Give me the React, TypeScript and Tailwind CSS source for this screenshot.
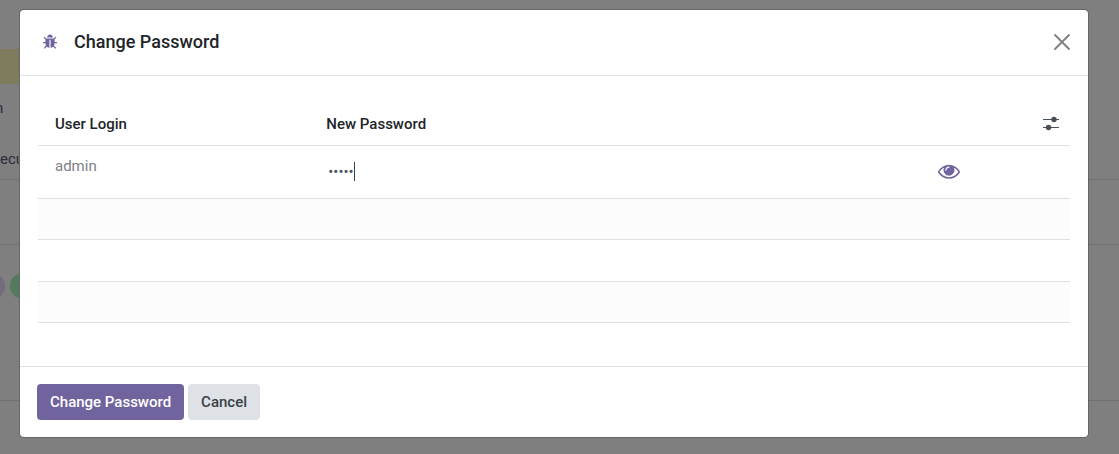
import { useState } from "react";

function BugIcon() {
  return (
    <svg viewBox="0 0 1792 1792" className="size-4 fill-current" aria-hidden="true">
      <path d="M1696 960q0 26-19 45t-45 19h-224q0 171-67 290l208 209q19 19 19 45t-19 45q-18 19-45 19t-45-19l-198-197q-5 5-15 13t-42 28.5-65 36.5-82 29-97 13v-896h-128v896q-51 0-101.5-13.5t-87-33-66-39-43.5-32.5l-15-14-183 207q-20 21-48 21-24 0-43-16-19-18-20.5-44.5t15.5-46.5l202-227q-58-114-58-274h-224q-26 0-45-19t-19-45 19-45 45-19h224v-294l-173-173q-19-19-19-45t19-45 45-19 45 19l173 173h844l173-173q19-19 45-19t45 19 19 45-19 45l-173 173v294h224q26 0 45 19t19 45zm-480-576h-640q0-133 93.5-226.5t226.5-93.5 226.5 93.5 93.5 226.5z" />
    </svg>
  );
}

function EyeIcon() {
  return (
    <svg viewBox="0 0 1792 1792" className="size-[22px] fill-current" aria-hidden="true">
      <path d="M1664 960q-152-236-381-353 61 104 61 225 0 185-131.5 316.5t-316.5 131.5-316.5-131.5-131.5-316.5q0-121 61-225-229 117-381 353 133 205 333.5 326.5t434.5 121.5 434.5-121.5 333.5-326.5zm-720-384q0-20-14-34t-34-14q-125 0-214.5 89.5t-89.5 214.5q0 20 14 34t34 14 34-14 14-34q0-86 61-147t147-61q20 0 34-14t14-34zm848 384q0 34-20 69-140 230-376.5 368.5t-499.5 138.5-499.5-139-376.5-368q-20-35-20-69t20-69q140-229 376.5-368t499.5-139 499.5 139 376.5 368q20 35 20 69z" />
    </svg>
  );
}

function SlidersIcon() {
  return (
    <svg viewBox="0 0 16 16" className="size-4" aria-hidden="true">
      <path d="M0 4.5h16M0 12.5h16" stroke="currentColor" strokeWidth="1.2" />
      <circle cx="11" cy="4.5" r="2.7" fill="currentColor" />
      <circle cx="5.5" cy="12.5" r="2.7" fill="currentColor" />
    </svg>
  );
}

function CloseIcon() {
  return (
    <svg viewBox="0 0 16 16" className="size-4" aria-hidden="true">
      <path d="M1 1l14 14M15 1L1 15" stroke="currentColor" strokeWidth="1.8" strokeLinecap="round" />
    </svg>
  );
}

function PageBehind() {
  return (
    <div className="absolute inset-0 overflow-hidden bg-[#7f7f7f] text-[15px] leading-5 text-[#2d2a3b]" aria-hidden="true">
      <div className="h-[180px] border-b border-[#707071] pt-[49px]">
        <div className="h-[35px] w-10 bg-[#7f7c5e]" />
        <div className="-ml-[5px] mt-[14px]">n</div>
        <div className="mt-[31px]">ecurity</div>
      </div>
      <div className="h-[65px] border-b border-[#707071]" />
      <div className="flex h-[156px] gap-[5px] border-b border-[#707071] pt-7">
        <div className="-ml-[21px] size-[26px] rounded-full bg-[#736c7c]" />
        <div className="size-[26px] rounded-full bg-[#557a5c]" />
      </div>
    </div>
  );
}

export default function App() {
  const [password, setPassword] = useState("admin");
  const [visible, setVisible] = useState(false);

  return (
    <div className="relative min-h-screen font-['Roboto',sans-serif] text-[15px] leading-[22px] text-[#212529]">
      <PageBehind />
      <div className="relative pt-[10px] pr-[31px] pb-4 pl-5">
        <div
          role="dialog"
          aria-labelledby="dialog-title"
          className="rounded-[4px] bg-white shadow-[0_0_0_1px_#666666]"
        >
          <header className="flex h-[66px] items-center border-b border-[#dee2e6] pr-4 pb-px pl-[22px]">
            <button type="button" aria-label="Debug" className="text-[#71639e]">
              <BugIcon />
            </button>
            <h1 id="dialog-title" className="ml-4 flex-1 text-lg leading-7 font-medium">
              Change Password
            </h1>
            <button type="button" aria-label="Close" className="p-0.5 text-[#7f7f7f]">
              <CloseIcon />
            </button>
          </header>

          <main className="px-[18px] pt-[26px] pb-[43px]">
            <table className="w-full table-fixed border-collapse">
              <colgroup>
                <col className="w-[26%]" />
                <col />
                <col className="w-[130px]" />
              </colgroup>
              <thead>
                <tr className="h-[43px] border-b border-[#dee2e6] text-left">
                  <th className="px-[17px] pt-[2px] font-medium">User Login</th>
                  <th className="px-5 pt-[2px] font-medium">New Password</th>
                  <th className="pr-[11px]">
                    <button type="button" aria-label="Optional columns" className="ml-auto block text-[#495057]">
                      <SlidersIcon />
                    </button>
                  </th>
                </tr>
              </thead>
              <tbody>
                <tr className="h-[53px] border-b border-[#dee2e6]">
                  <td className="px-[17px] pt-[9px] align-top text-[#7c8187]">admin</td>
                  <td className="pl-[22px]">
                    <div className="relative">
                      <input
                        type={visible ? "text" : "password"}
                        aria-label="New Password"
                        value={password}
                        onChange={(e) => setPassword(e.target.value)}
                        className="block w-full bg-transparent text-[#495057] outline-none"
                      />
                      <span className="absolute top-px left-[26px] h-[19px] w-px bg-[#374151]" />
                    </div>
                  </td>
                  <td className="pb-[2px]">
                    <button
                      type="button"
                      aria-label="Show password"
                      onClick={() => setVisible(!visible)}
                      className="-ml-[2px] block text-[#71639e]"
                    >
                      <EyeIcon />
                    </button>
                  </td>
                </tr>
                <tr className="h-[41px] border-b border-[#dee2e6] bg-[#fcfcfc]">
                  <td colSpan={3} />
                </tr>
                <tr className="h-[42px] border-b border-[#dee2e6]">
                  <td colSpan={3} />
                </tr>
                <tr className="h-[41px] border-b border-[#dee2e6] bg-[#fcfcfc]">
                  <td colSpan={3} />
                </tr>
              </tbody>
            </table>
          </main>

          <footer className="flex gap-1 border-t border-[#dee2e6] px-[17px] py-[17px] font-medium">
            <button type="button" className="h-9 rounded-[4px] bg-[#71639e] px-[13px] text-white">
              Change Password
            </button>
            <button type="button" className="h-9 rounded-[4px] bg-[#dee2e6] px-[13px] text-[#3c4146]">
              Cancel
            </button>
          </footer>
        </div>
      </div>
    </div>
  );
}
